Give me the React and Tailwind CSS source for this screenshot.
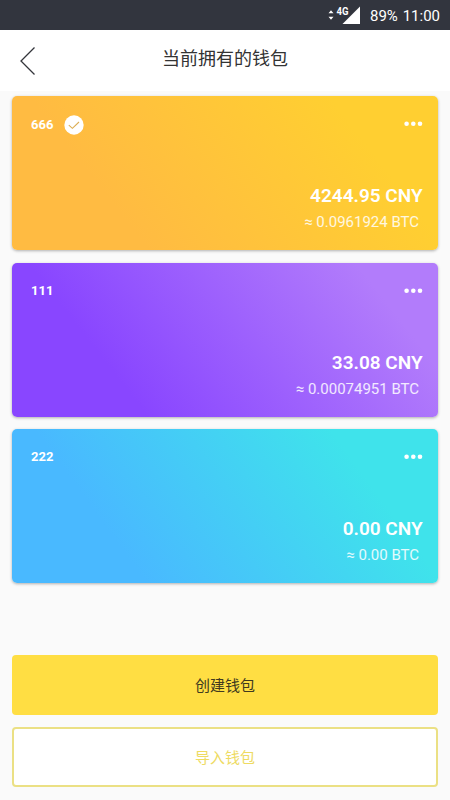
const wallets = [
  {
    name: "666",
    cny: "4244.95 CNY",
    btc: "≈ 0.0961924 BTC",
    selected: true,
    bg: "bg-[linear-gradient(52deg,#ffbb42_25%,#ffcf31_80%)]",
  },
  {
    name: "111",
    cny: "33.08 CNY",
    btc: "≈ 0.00074951 BTC",
    bg: "bg-[linear-gradient(52deg,#8946ff_25%,#b27cfb_85%)]",
  },
  {
    name: "222",
    cny: "0.00 CNY",
    btc: "≈ 0.00 BTC",
    bg: "bg-[linear-gradient(54deg,#49b9ff_25%,#3fe3eb_80%)]",
  },
];

function StatusBar() {
  return (
    <div className="flex h-[30px] items-center justify-end bg-[#32353e] pr-[10px] text-white">
      <svg width="34" height="22" viewBox="0 0 34 22" className="mr-[9px]">
        <path d="M1.5 9.3 4 6.3 6.5 9.3ZM1.5 12.7 4 15.7 6.5 12.7Z" fill="#fff" />
        <path d="M33 2.5V20H15.5Z" fill="#fff" />
        <text x="9.5" y="10.6" fontSize="10" fontWeight="700" fontFamily="Roboto, sans-serif" fill="#fff" stroke="#32353e" strokeWidth="1.5" paintOrder="stroke" textLength="12" lengthAdjust="spacingAndGlyphs">4G</text>
      </svg>
      <span className="pt-[2px] text-[15px] leading-none tracking-[-0.1px]">89%</span>
      <span className="ml-[5px] pt-[2px] text-[15px] leading-none">11:00</span>
    </div>
  );
}

function WalletCard({ wallet }) {
  return (
    <section className={`flex h-[154px] flex-col justify-between rounded-[5px] pt-[18px] pr-[15px] pb-[18px] pl-[18.5px] text-white shadow-[0_1px_3px_rgba(0,0,0,0.3)] ${wallet.bg}`}>
      <div className="flex h-5 items-center">
        <span className="pt-px text-[13px] font-bold leading-5 tracking-[0.15px]">{wallet.name}</span>
        {wallet.selected && (
          <svg width="20" height="20" viewBox="0 0 20 20" className="mt-px ml-[10px]">
            <circle cx="10" cy="10" r="9.7" fill="#fff" />
            <path d="m4.8 10.2 3.6 3.1 6.6-6.3" fill="none" stroke="#dcae55" strokeWidth="1.1" />
          </svg>
        )}
        <svg width="19" height="6" viewBox="0 0 19 6" className="ml-auto" fill="#fff">
          <circle cx="2.6" cy="2.7" r="2.3" />
          <circle cx="9.3" cy="2.7" r="2.3" />
          <circle cx="16" cy="2.7" r="2.3" />
        </svg>
      </div>
      <div className="text-right">
        <div className="text-[19px] font-semibold leading-[26px]">{wallet.cny}</div>
        <div className="mt-[3px] pr-[3.5px] text-[15px] leading-5 text-white/85">{wallet.btc}</div>
      </div>
    </section>
  );
}

export default function App() {
  return (
    <div className="flex h-[800px] w-[450px] flex-col overflow-hidden bg-[#fafafa] font-[Roboto,'Noto_Sans_CJK_SC',sans-serif]">
      <StatusBar />
      <header className="grid h-[61px] grid-cols-[60px_1fr_60px] items-center bg-white">
        <button aria-label="返回" className="pl-5">
          <svg width="16" height="30" viewBox="0 0 16 30" fill="none" stroke="#34363b" strokeWidth="1.3">
            <path d="M14.5 1.5 1 15l13.5 13.5" />
          </svg>
        </button>
        <h1 className="pb-[4px] text-center text-[18px] leading-6 text-[#333]">当前拥有的钱包</h1>
      </header>
      <main className="flex flex-col gap-[12.3px] px-[12.4px] pt-[5.4px]">
        {wallets.map((w) => (
          <WalletCard key={w.name} wallet={w} />
        ))}
      </main>
      <footer className="mt-auto flex flex-col gap-3 px-[12.4px] pb-[13px]">
        <button className="h-[60px] rounded-[4px] bg-[#ffde43] pt-[3px] text-[15px] text-[#40391f]">创建钱包</button>
        <button className="h-[60px] rounded-[4px] border-2 border-[#ebe084] bg-white pt-[3px] text-[15px] text-[#eedb62]">导入钱包</button>
      </footer>
    </div>
  );
}
